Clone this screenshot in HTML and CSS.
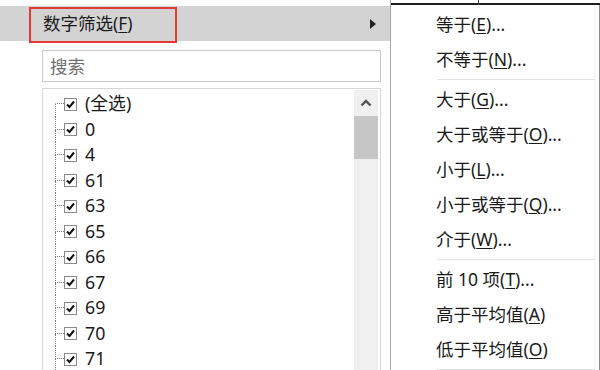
FILE: index.html
```html
<!DOCTYPE html>
<html lang="zh-CN">
<head>
<meta charset="utf-8">
<title>数字筛选</title>
<link rel="stylesheet" href="styles.css">
</head>
<body>
<div class="screen">
  <div class="panel">
    <div class="hl-row">
      <span class="hl-text">数字筛选(<u>F</u>)</span>
      <span class="mark"></span>
      <span class="arrow"></span>
    </div>
    <div class="search">搜索</div>
    <div class="listbox">
      <div class="tree">
        <div class="row"><span class="conn"><i></i><i></i></span><span class="cb"><svg width="11" height="11" viewBox="0 0 11 11"><polyline points="2,5.5 4.5,8 9,2.5" fill="none" stroke="#111" stroke-width="2"/></svg></span><span class="lbl">(全选)</span></div>
        <div class="row"><span class="conn"><i></i><i></i></span><span class="cb"><svg width="11" height="11" viewBox="0 0 11 11"><polyline points="2,5.5 4.5,8 9,2.5" fill="none" stroke="#111" stroke-width="2"/></svg></span><span class="lbl">0</span></div>
        <div class="row"><span class="conn"><i></i><i></i></span><span class="cb"><svg width="11" height="11" viewBox="0 0 11 11"><polyline points="2,5.5 4.5,8 9,2.5" fill="none" stroke="#111" stroke-width="2"/></svg></span><span class="lbl">4</span></div>
        <div class="row"><span class="conn"><i></i><i></i></span><span class="cb"><svg width="11" height="11" viewBox="0 0 11 11"><polyline points="2,5.5 4.5,8 9,2.5" fill="none" stroke="#111" stroke-width="2"/></svg></span><span class="lbl">61</span></div>
        <div class="row"><span class="conn"><i></i><i></i></span><span class="cb"><svg width="11" height="11" viewBox="0 0 11 11"><polyline points="2,5.5 4.5,8 9,2.5" fill="none" stroke="#111" stroke-width="2"/></svg></span><span class="lbl">63</span></div>
        <div class="row"><span class="conn"><i></i><i></i></span><span class="cb"><svg width="11" height="11" viewBox="0 0 11 11"><polyline points="2,5.5 4.5,8 9,2.5" fill="none" stroke="#111" stroke-width="2"/></svg></span><span class="lbl">65</span></div>
        <div class="row"><span class="conn"><i></i><i></i></span><span class="cb"><svg width="11" height="11" viewBox="0 0 11 11"><polyline points="2,5.5 4.5,8 9,2.5" fill="none" stroke="#111" stroke-width="2"/></svg></span><span class="lbl">66</span></div>
        <div class="row"><span class="conn"><i></i><i></i></span><span class="cb"><svg width="11" height="11" viewBox="0 0 11 11"><polyline points="2,5.5 4.5,8 9,2.5" fill="none" stroke="#111" stroke-width="2"/></svg></span><span class="lbl">67</span></div>
        <div class="row"><span class="conn"><i></i><i></i></span><span class="cb"><svg width="11" height="11" viewBox="0 0 11 11"><polyline points="2,5.5 4.5,8 9,2.5" fill="none" stroke="#111" stroke-width="2"/></svg></span><span class="lbl">69</span></div>
        <div class="row"><span class="conn"><i></i><i></i></span><span class="cb"><svg width="11" height="11" viewBox="0 0 11 11"><polyline points="2,5.5 4.5,8 9,2.5" fill="none" stroke="#111" stroke-width="2"/></svg></span><span class="lbl">70</span></div>
        <div class="row"><span class="conn"><i></i><i></i></span><span class="cb"><svg width="11" height="11" viewBox="0 0 11 11"><polyline points="2,5.5 4.5,8 9,2.5" fill="none" stroke="#111" stroke-width="2"/></svg></span><span class="lbl">71</span></div>
        <div class="row tail"><span class="conn"><i></i><i></i></span></div>
      </div>
      <div class="scrollbar">
        <div class="sb-btn"><svg width="12" height="9" viewBox="0 0 12 9"><polyline points="1.5,7.5 6,3 10.5,7.5" fill="none" stroke="#505050" stroke-width="2.4"/></svg></div>
        <div class="sb-thumb"></div>
      </div>
    </div>
  </div>
  <div class="side">
    <div class="grid-top"><span class="gcell first"></span><span class="gcell"></span></div>
    <div class="submenu">
      <div class="item">等于(<u>E</u>)...</div>
      <div class="item">不等于(<u>N</u>)...</div>
      <div class="sep"></div>
      <div class="item">大于(<u>G</u>)...</div>
      <div class="item">大于或等于(<u>O</u>)...</div>
      <div class="item">小于(<u>L</u>)...</div>
      <div class="item">小于或等于(<u>Q</u>)...</div>
      <div class="item">介于(<u>W</u>)...</div>
      <div class="sep"></div>
      <div class="item">前 10 项(<u>T</u>)...</div>
      <div class="item">高于平均值(<u>A</u>)</div>
      <div class="item">低于平均值(<u>O</u>)</div>
      <div class="sep"></div>
    </div>
  </div>
</div>
</body>
</html>
```

FILE: styles.css
```css
* { box-sizing: border-box; }
html, body { margin: 0; padding: 0; }
body {
  width: 600px;
  height: 370px;
  overflow: hidden;
  background: #fff;
  font-family: "Noto Sans", "Noto Sans CJK SC", sans-serif;
  color: #1a1a1a;
}
u { text-decoration-thickness: 1px; text-underline-offset: 2px; }
.screen { display: flex; height: 370px; }

/* left dropdown panel */
.panel {
  width: 391px;
  border-right: 1px solid #a8a8a8;
  display: flex;
  flex-direction: column;
  padding-top: 6px;
}
.hl-row {
  position: relative;
  height: 35px;
  background: #d3d3d3;
  display: flex;
  align-items: center;
  padding-left: 43px;
  padding-right: 14px;
  font-size: 17.5px;
}
.hl-text { flex: 1; line-height: 35px; }
.mark {
  position: absolute;
  left: 29px;
  top: 1px;
  width: 148px;
  height: 36px;
  border: 2px solid #e53935;
}
.arrow {
  width: 0; height: 0;
  border-top: 5px solid transparent;
  border-bottom: 5px solid transparent;
  border-left: 6px solid #222;
}
.search {
  margin: 9px 0 0 42px;
  width: 339px;
  height: 32px;
  border: 1px solid #c8c8c8;
  color: #6e6e6e;
  font-size: 17.5px;
  line-height: 30px;
  padding-left: 7px;
}
.listbox {
  margin: 6px 0 0 42px;
  width: 339px;
  flex: 1;
  border: 1px solid #d6d6d6;
  border-bottom: none;
  display: flex;
  overflow: hidden;
}
.tree { flex: 1; padding: 2px 0 0 12px; }
.row {
  display: flex;
  align-items: stretch;
  height: 25.5px;
  font-size: 17.8px;
}
.conn { display: flex; flex-direction: column; width: 9px; }
.conn i { flex: 1; border-left: 1px dotted #777; }
.conn i:first-child { border-bottom: 1px dotted #777; }
.row:first-child .conn i:first-child { border-left-color: transparent; }
.row.tail .conn i:first-child { border-bottom-color: transparent; }
.cb {
  align-self: center;
  width: 13px;
  height: 13px;
  border: 1px solid #8a8a8a;
  background: #fff;
  display: flex;
  align-items: center;
  justify-content: center;
  margin-top: 1px;
}
.cb svg { display: block; }
.lbl { margin-left: 8px; line-height: 25.5px; }
.scrollbar {
  width: 24px;
  margin: 1px 2px 0 0;
  background: #f0f0f0;
  display: flex;
  flex-direction: column;
}
.sb-btn {
  height: 26px;
  display: flex;
  align-items: center;
  justify-content: center;
  padding-bottom: 2px;
}
.sb-thumb { height: 43px; background: #c6c6c6; }

/* right submenu */
.side { flex: 1; display: flex; flex-direction: column; }
.grid-top {
  height: 6px;
  display: flex;
}
.gcell {
  flex: 1;
  height: 5px;
  background: linear-gradient(#1e1e1e, #1e1e1e) 0 3px / 100% 2px no-repeat;
}
.gcell.first {
  flex: 0 0 88px;
  border-right: 1px solid #444;
}
.submenu {
  flex: 1;
  border-right: 1px solid #8c8c8c;
  background: #fff;
  padding: 2px 4px 0 0;
  box-shadow: inset -4px 0 0 #fff, inset -5px 0 0 #f0f0f0;
}
.item {
  height: 35px;
  line-height: 35px;
  padding-left: 45px;
  font-size: 17.5px;
  white-space: nowrap;
}
.sep {
  height: 5px;
  margin-left: 46px;
  display: flex;
  align-items: center;
}
.sep::before {
  content: "";
  flex: 1;
  border-top: 1px solid #e2e2e2;
}
```
